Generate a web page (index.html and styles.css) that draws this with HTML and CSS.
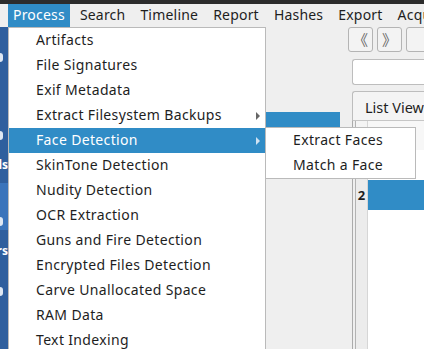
FILE: index.html
```html
<!DOCTYPE html>
<html lang="en">
<head>
    <meta charset="UTF-8">
    <title>Case Viewer</title>
    <link rel="stylesheet" href="styles.css">
</head>
<body>
    <div class="titlebar"></div>
    <nav class="menubar">
        <span class="menu-item active">Process</span>
        <span class="menu-item">Search</span>
        <span class="menu-item">Timeline</span>
        <span class="menu-item">Report</span>
        <span class="menu-item">Hashes</span>
        <span class="menu-item">Export</span>
        <span class="menu-item">Acquire</span>
    </nav>

    <div class="workspace">
        <aside class="sidebar">
            <div class="side-btn"><span class="side-icon"></span></div>
            <div class="side-btn"><span class="side-icon"></span><span class="side-label">Tools</span></div>
            <div class="side-btn light"><span class="side-icon"></span><span class="side-label">Filters</span></div>
            <div class="side-btn"><span class="side-icon"></span></div>
        </aside>

        <section class="tree-panel">
            <div class="tree-row selected"></div>
        </section>

        <section class="view-pane">
            <div class="toolbar">
                <button class="nav-btn">&#x300A;</button>
                <button class="nav-btn">&#x300B;</button>
                <button class="nav-btn"></button>
            </div>
            <div class="search-box"></div>
            <div class="tabs">
                <span class="tab">List View</span>
            </div>
            <div class="tab-pane">
                <div class="grid-row head"><span class="row-num"></span><span class="cell"></span></div>
                <div class="grid-row"><span class="row-num"></span><span class="cell"></span></div>
                <div class="grid-row current"><span class="row-num">2</span><span class="cell"></span></div>
                <div class="grid-rest"><span class="row-num"></span><span class="cell"></span></div>
            </div>
        </section>
    </div>

    <!-- open Process menu -->
    <ul class="dropdown">
        <li>Artifacts</li>
        <li>File Signatures</li>
        <li>Exif Metadata</li>
        <li class="has-sub">Extract Filesystem Backups</li>
        <li class="has-sub hover">Face Detection</li>
        <li>SkinTone Detection</li>
        <li>Nudity Detection</li>
        <li>OCR Extraction</li>
        <li>Guns and Fire Detection</li>
        <li>Encrypted Files Detection</li>
        <li>Carve Unallocated Space</li>
        <li>RAM Data</li>
        <li>Text Indexing</li>
    </ul>

    <ul class="submenu">
        <li>Extract Faces</li>
        <li>Match a Face</li>
    </ul>
</body>
</html>
```

FILE: styles.css
```css
html {
    overflow: hidden;
}
body {
    margin: 0;
    width: 424px;
    height: 349px;
    overflow: hidden;
    background: #efefef;
    font-family: "Noto Sans", "Open Sans", sans-serif;
    font-size: 14px;
    color: #1e1e1e;
    position: relative;
}
.titlebar {
    height: 4px;
    background: #2c2c2c;
}
.menubar {
    display: flex;
    gap: 5px;
    height: 23px;
    padding-left: 8px;
    background: #efefef;
    white-space: nowrap;
    overflow: hidden;
}
.menu-item {
    padding: 0 5px;
    line-height: 22px;
    letter-spacing: 0.2px;
}
.menu-item.active {
    background: #308cc6;
    color: #fff;
}

.workspace {
    display: flex;
    height: 322px;
}
.sidebar {
    width: 8px;
    flex-shrink: 0;
    background: #2f5f9e;
    overflow: hidden;
}
.side-btn {
    height: 78px;
    box-sizing: border-box;
    padding-top: 26px;
    display: flex;
    flex-direction: column;
    align-items: flex-end;
    gap: 17px;
    overflow: hidden;
}
.side-btn.light {
    padding-top: 34px;
    background: linear-gradient(#3a74bb 60%, #2f5f9e 60%);
}
.side-icon {
    width: 4px;
    height: 9px;
    margin-right: 5px;
    border-radius: 0 3px 3px 0;
    background: #dfe8f3;
}
.side-label {
    color: #fff;
    font-weight: bold;
    font-size: 12px;
    line-height: 16px;
}

.tree-panel {
    width: 337px;
    flex-shrink: 0;
    padding-top: 85px;
    padding-right: 5px;
    box-sizing: border-box;
}
.tree-row {
    height: 15px;
}
.tree-row.selected {
    background: #308cc6;
}

.view-pane {
    flex: 1;
    min-width: 0;
    overflow: hidden;
    display: flex;
    flex-direction: column;
    padding-left: 3px;
}
.toolbar {
    display: flex;
    gap: 4px;
    height: 25px;
}
.nav-btn {
    width: 25px;
    height: 25px;
    padding: 0;
    border: 1px solid #b4b4b4;
    border-radius: 3px;
    background: #f3f3f3;
    color: #666;
    font-size: 15px;
    font-family: "Noto Sans CJK SC", sans-serif;
    line-height: 22px;
    flex-shrink: 0;
}
.search-box {
    margin: 7px 0 0 4px;
    height: 24px;
    border: 1px solid #bdbdbd;
    border-right: none;
    border-radius: 3px 0 0 3px;
    background: #fff;
}
.tabs {
    margin: 6px 0 0 4px;
    display: flex;
    height: 29px;
}
.tab {
    flex: 1;
    border: 1px solid #bdbdbd;
    border-right: none;
    border-bottom: none;
    border-radius: 3px 0 0 0;
    background: #f4f4f4;
    padding: 5px 0 0 12px;
    white-space: nowrap;
    font-size: 14.5px;
}
.tab-pane {
    margin-left: 4px;
    flex: 1;
    border-left: 1px solid #ababab;
    border-top: 1px solid #c6c6c6;
    padding-left: 2px;
    display: flex;
    flex-direction: column;
}
.grid-row, .grid-rest {
    display: flex;
    border-left: 1px solid #b3b3b3;
}
.grid-row { height: 30px; }
.grid-row.head { height: 29px; }
.grid-rest { flex: 1; }
.row-num {
    width: 11px;
    background: #ececec;
    border-right: 1px solid #d6d6d6;
    font-weight: bold;
    font-size: 13px;
    text-align: center;
    line-height: 31px;
}
.grid-row.head .row-num { background: #f4f4f4; }
.cell {
    flex: 1;
    background: #fff;
}
.grid-row.head .cell { background: #f7f7f7; }
.grid-row.current .cell {
    background: #308cc6;
}

.dropdown, .submenu {
    position: absolute;
    margin: 0;
    padding: 0;
    list-style: none;
    background: #fff;
    border: 1px solid #bababa;
    white-space: nowrap;
}
.dropdown {
    left: 8px;
    top: 27px;
    width: 256px;
    height: 321px;
    border-bottom: none;
    overflow: hidden;
}
.submenu {
    left: 265px;
    top: 127px;
    width: 149px;
}
.dropdown li, .submenu li {
    position: relative;
    height: 25px;
    line-height: 24px;
    padding-left: 27px;
    letter-spacing: 0.35px;
}
.dropdown li.hover {
    background: #308cc6;
    color: #fff;
}
.has-sub::after {
    content: "";
    position: absolute;
    right: 5px;
    top: 9px;
    border-left: 4px solid #666;
    border-top: 4px solid transparent;
    border-bottom: 4px solid transparent;
}
.has-sub.hover::after {
    border-left-color: #cfe2f2;
}
```
